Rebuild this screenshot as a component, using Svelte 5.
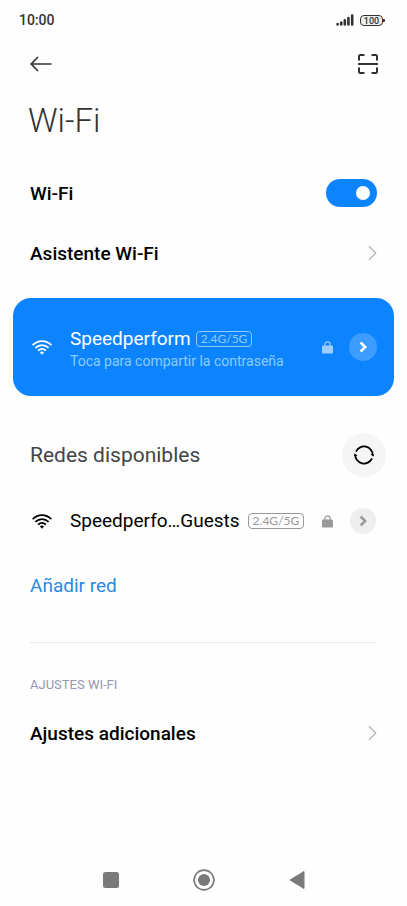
<script>
	let wifiOn = true;
	let spinning = false;

	const band = '2.4G/5G';

	const refresh = () => {
		spinning = !spinning;
	};
</script>

<!-- Small icons shared by both network rows -->
{#snippet wifiIcon()}
	<svg class="wifi" viewBox="0 0 20 15" width="20" height="15" aria-hidden="true">
		<g fill="none" stroke="currentColor" stroke-width="1.8">
			<path d="M0.6 5.1C6 -0.3 14 -0.3 19.4 5.1" />
			<path d="M3.4 7.9C7.3 4.2 12.7 4.2 16.6 7.9" />
			<path d="M6.1 10.6C8.4 8.5 11.6 8.5 13.9 10.6" />
		</g>
		<path d="M7.9 12.3Q10 10.8 12.1 12.3L10 14.8Z" fill="currentColor" />
	</svg>
{/snippet}

{#snippet lockIcon()}
	<svg class="lock" viewBox="0 0 11 13" width="11" height="13" aria-hidden="true">
		<path d="M2.9 6V3.4a2.6 2.6 0 0 1 5.2 0V6" fill="none" stroke="currentColor" stroke-width="1.2" />
		<rect x="0" y="4.6" width="11" height="8" rx="1" fill="currentColor" />
	</svg>
{/snippet}

{#snippet arrowIcon()}
	<svg viewBox="0 0 8 12" width="8" height="12" aria-hidden="true">
		<path d="M1.6 1.5L6.2 6L1.6 10.5" fill="none" stroke="currentColor" stroke-width="2.5" />
	</svg>
{/snippet}

{#snippet chevron()}
	<svg class="chevron" viewBox="0 0 9 16" width="9" height="16" aria-hidden="true">
		<path d="M1 1.2L7.8 8L1 14.8" fill="none" stroke="currentColor" stroke-width="1.3" />
	</svg>
{/snippet}

<div class="screen">
	<div class="status">
		<span class="time">10:00</span>
		<svg class="signal" viewBox="0 0 18 12" width="18" height="12" aria-hidden="true">
			<g fill="none" stroke="currentColor" stroke-width="2.6" stroke-linecap="round">
				<path d="M1.6 10.1v.4M5.2 8.6v1.9M8.8 6.4v4.1M12.4 4v6.5M16.2 1.5v9" />
			</g>
		</svg>
		<span class="battery">100</span>
	</div>

	<header>
		<button class="icon-button" aria-label="Atrás">
			<svg viewBox="0 0 22 16" width="22" height="16" aria-hidden="true">
				<path d="M21.5 8H1.4M8 1L1.2 8L8 15" fill="none" stroke="currentColor" stroke-width="1.7" />
			</svg>
		</button>
		<button class="icon-button" aria-label="Escanear código">
			<svg viewBox="0 0 20 20" width="20" height="20" aria-hidden="true">
				<g fill="none" stroke="currentColor" stroke-width="2">
					<path d="M1 6.5V2.5Q1 1 2.5 1H6.5M13.5 1H17.5Q19 1 19 2.5V6.5M19 13.5V17.5Q19 19 17.5 19H13.5M6.5 19H2.5Q1 19 1 17.5V13.5" />
					<path d="M0 10H20" />
				</g>
			</svg>
		</button>
	</header>

	<main>
		<h1>Wi-Fi</h1>

		<label class="row">
			<span>Wi-Fi</span>
			<input class="switch" type="checkbox" bind:checked={wifiOn} />
		</label>

		<a class="row" href="#asistente">
			<span>Asistente Wi-Fi</span>
			{@render chevron()}
		</a>

		<section class="network connected">
			{@render wifiIcon()}
			<div class="info">
				<div class="name"><span>Speedperform</span><span class="band">{band}</span></div>
				<p>Toca para compartir la contraseña</p>
			</div>
			{@render lockIcon()}
			<button class="details" aria-label="Detalles de Speedperform">{@render arrowIcon()}</button>
		</section>

		<div class="available">
			<h2>Redes disponibles</h2>
			<button class="refresh" class:spinning aria-label="Actualizar" on:click={refresh}>
				<svg viewBox="0 0 20 20" width="20" height="20" aria-hidden="true">
					<g fill="none" stroke="currentColor" stroke-width="1.8">
						<path d="M2 6.6A8.8 8.8 0 0 1 18.8 10.6" />
						<path d="M18 13.4A8.8 8.8 0 0 1 1.2 9.4" />
					</g>
					<path d="M16.4 9H19.7V11.8ZM3.6 11H0.3V8.2Z" fill="currentColor" />
				</svg>
			</button>
		</div>

		<section class="network">
			{@render wifiIcon()}
			<div class="info">
				<div class="name wide"><span>Speedperfo…Guests</span><span class="band">{band}</span></div>
			</div>
			{@render lockIcon()}
			<button class="details" aria-label="Detalles de Speedperform Guests">{@render arrowIcon()}</button>
		</section>

		<a class="add" href="#nueva">Añadir red</a>

		<hr />

		<h3>AJUSTES WI-FI</h3>

		<a class="row" href="#ajustes">
			<span>Ajustes adicionales</span>
			{@render chevron()}
		</a>
	</main>

	<nav>
		<button aria-label="Recientes">
			<svg viewBox="0 0 22 22" width="22" height="22" aria-hidden="true">
				<rect x="3" y="3" width="16" height="16" rx="2.5" fill="currentColor" />
			</svg>
		</button>
		<button aria-label="Inicio">
			<svg viewBox="0 0 22 22" width="22" height="22" aria-hidden="true">
				<circle cx="11" cy="11" r="9.9" fill="none" stroke="currentColor" stroke-width="1.6" />
				<circle cx="11" cy="11" r="6" fill="currentColor" />
			</svg>
		</button>
		<button aria-label="Volver">
			<svg viewBox="0 0 22 22" width="22" height="22" aria-hidden="true">
				<path d="M4 11L18 2.5V19.5Z" fill="currentColor" stroke="currentColor" stroke-linejoin="round" />
			</svg>
		</button>
	</nav>
</div>

<style>
	:global(body) {
		margin: 0;
		background: #fefefe;
	}

	.screen {
		display: flex;
		flex-direction: column;
		min-height: 100vh;
		font-family: Roboto, sans-serif;
		color: #000;
	}

	button {
		display: flex;
		align-items: center;
		justify-content: center;
		padding: 0;
		border: none;
		background: none;
		color: inherit;
		cursor: pointer;
	}

	svg {
		display: block;
		flex: none;
	}

	/* Status bar */
	.status {
		display: flex;
		align-items: center;
		height: 40px;
		padding: 0 24px 0 19px;
		color: #333;
	}

	.time {
		flex: 1;
		font-size: 14px;
		font-weight: 500;
	}

	.battery {
		position: relative;
		box-sizing: border-box;
		width: 23px;
		height: 11px;
		margin-left: 6px;
		border: 1px solid #333;
		border-radius: 4px;
		background: #eee;
		font-size: 9px;
		font-weight: 500;
		line-height: 10px;
		text-align: center;
	}

	.battery::after {
		content: '';
		position: absolute;
		top: 3px;
		right: -3px;
		width: 2px;
		height: 3px;
		border-radius: 0 1px 1px 0;
		background: #333;
	}

	/* Toolbar */
	header {
		display: flex;
		align-items: center;
		justify-content: space-between;
		height: 48px;
		padding: 0 29px 0 30px;
		color: #333;
	}

	main {
		display: flex;
		flex-direction: column;
	}

	h1 {
		margin: 13px 28px 22px;
		color: #333;
		font-size: 33px;
		font-weight: 300;
		line-height: 40px;
	}

	.row {
		display: flex;
		align-items: center;
		justify-content: space-between;
		height: 60px;
		padding: 0 30px;
		color: #000;
		font-size: 19px;
		font-weight: 500;
		text-decoration: none;
	}

	.chevron {
		color: #b4b4b4;
	}

	.switch {
		appearance: none;
		display: flex;
		align-items: center;
		box-sizing: border-box;
		width: 51px;
		height: 28px;
		margin: 0;
		padding: 0 7px;
		border-radius: 14px;
		background: #ddd;
		cursor: pointer;
	}

	.switch::before {
		content: '';
		width: 14px;
		height: 14px;
		border-radius: 50%;
		background: #fff;
	}

	.switch:checked {
		justify-content: flex-end;
		background: #0d84ff;
	}

	/* Networks */
	.network {
		display: flex;
		align-items: center;
		height: 60px;
		padding: 0 31px 0 32px;
	}

	.info {
		flex: 1;
		min-width: 0;
		margin-left: 18px;
	}

	.name {
		display: flex;
		align-items: center;
		gap: 5px;
		font-size: 19px;
		line-height: 24px;
		white-space: nowrap;
	}

	.name.wide {
		gap: 8px;
	}

	.band {
		box-sizing: border-box;
		height: 16px;
		padding: 0 4px;
		border: 1px solid #999;
		border-radius: 4px;
		color: #999;
		font-family: Lato, sans-serif;
		font-size: 12px;
		line-height: 14px;
	}

	.info p {
		margin: 0;
		color: #8ccbff;
		font-size: 14px;
		line-height: 20px;
	}

	.lock {
		color: #999;
	}

	.details {
		width: 26px;
		height: 26px;
		margin-left: 17px;
		border-radius: 50%;
		background: #eee;
		color: #999;
	}

	.connected {
		height: 98px;
		margin: 15px 13px 0;
		padding: 0 17px 0 19px;
		border-radius: 18px;
		background: #0d84ff;
		color: #fff;
	}

	.connected .info {
		padding-top: 3px;
	}

	.connected .band {
		border-color: #8ccbff;
		color: #8ccbff;
	}

	.connected .lock {
		color: #9dceff;
	}

	.connected .details {
		width: 28px;
		height: 28px;
		margin-left: 16px;
		background: #3d9dff;
		color: #fff;
	}

	.available {
		display: flex;
		align-items: center;
		justify-content: space-between;
		height: 44px;
		margin: 37px 21px 14px 30px;
	}

	h2 {
		margin: 0;
		color: #444;
		font-size: 21px;
		font-weight: 400;
	}

	.refresh {
		width: 44px;
		height: 44px;
		border-radius: 50%;
		background: #f5f5f5;
	}

	.spinning svg {
		animation: spin 1s linear infinite;
	}

	@keyframes spin {
		to {
			transform: rotate(360deg);
		}
	}

	.add {
		align-self: flex-start;
		margin: 23px 30px 0;
		color: #2a8ae2;
		font-size: 19px;
		line-height: 24px;
		text-decoration: none;
	}

	hr {
		height: 1px;
		margin: 44px 30px 0;
		border: none;
		background: #e8e8e8;
	}

	h3 {
		margin: 32px 30px 8px;
		color: #9397b5;
		font-size: 13px;
		font-weight: 400;
		line-height: 20px;
	}

	/* Navigation keys */
	nav {
		display: flex;
		justify-content: center;
		gap: 71px;
		margin-top: auto;
		padding: 14px 0 15px;
		color: #7a7a7a;
	}
</style>
